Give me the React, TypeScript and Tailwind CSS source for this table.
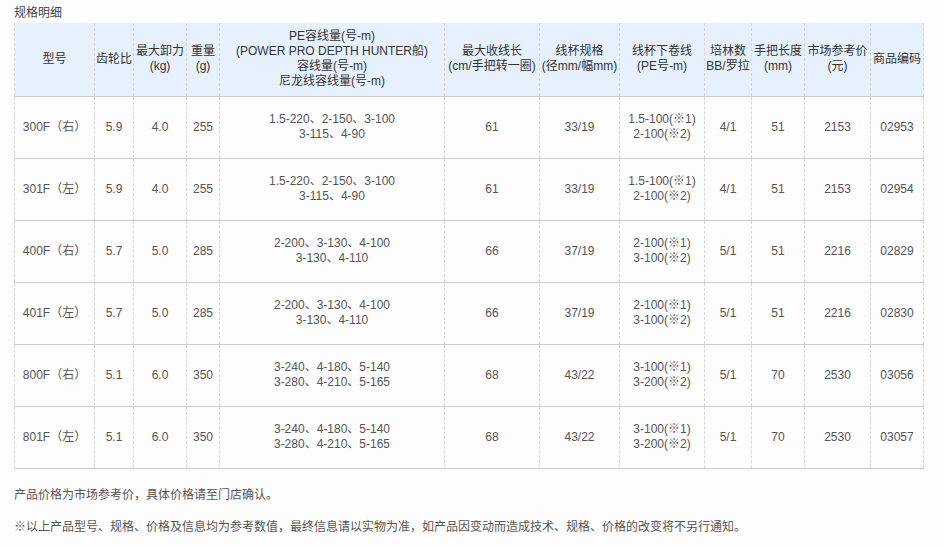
const rows = [
  ["300F（右）", "5.9", "4.0", "255", ["1.5-220、2-150、3-100", "3-115、4-90"], "61", "33/19", ["1.5-100(※1)", "2-100(※2)"], "4/1", "51", "2153", "02953"],
  ["301F（左）", "5.9", "4.0", "255", ["1.5-220、2-150、3-100", "3-115、4-90"], "61", "33/19", ["1.5-100(※1)", "2-100(※2)"], "4/1", "51", "2153", "02954"],
  ["400F（右）", "5.7", "5.0", "285", ["2-200、3-130、4-100", "3-130、4-110"], "66", "37/19", ["2-100(※1)", "3-100(※2)"], "5/1", "51", "2216", "02829"],
  ["401F（左）", "5.7", "5.0", "285", ["2-200、3-130、4-100", "3-130、4-110"], "66", "37/19", ["2-100(※1)", "3-100(※2)"], "5/1", "51", "2216", "02830"],
  ["800F（右）", "5.1", "6.0", "350", ["3-240、4-180、5-140", "3-280、4-210、5-165"], "68", "43/22", ["3-100(※1)", "3-200(※2)"], "5/1", "70", "2530", "03056"],
  ["801F（左）", "5.1", "6.0", "350", ["3-240、4-180、5-140", "3-280、4-210、5-165"], "68", "43/22", ["3-100(※1)", "3-200(※2)"], "5/1", "70", "2530", "03057"],
] as const;

const widths = [80, 39, 53, 33, 225, 95, 80, 85, 47, 53, 66, 53];

const headers: string[][] = [
  ["型号"],
  ["齿轮比"],
  ["最大卸力", "(kg)"],
  ["重量", "(g)"],
  ["PE容线量(号-m)", "(POWER PRO DEPTH HUNTER船)", "容线量(号-m)", "尼龙线容线量(号-m)"],
  ["最大收线长", "(cm/手把转一圈)"],
  ["线杯规格", "(径mm/幅mm)"],
  ["线杯下卷线", "(PE号-m)"],
  ["培林数", "BB/罗拉"],
  ["手把长度", "(mm)"],
  ["市场参考价", "(元)"],
  ["商品编码"],
];

const cell = "border-x border-dashed border-x-[#d6d6d6] text-center align-middle p-0";

export default function App() {
  return (
    <div
      className="min-h-[548px] w-[945px] bg-[#fdfdfd] text-[12px] leading-[15px] text-[#555]"
      style={{ fontFamily: '"Liberation Sans", "Noto Sans CJK SC", sans-serif' }}
    >
      <div className="px-[14px] pt-[6px]">
        <div className="h-[17px] text-[#444]">规格明细</div>
        <table className="table-fixed border-collapse w-[909px]">
          <colgroup>
            {widths.map((w, i) => (
              <col key={i} style={{ width: w }} />
            ))}
          </colgroup>
          <thead>
            <tr className="h-[73px] bg-[#e7f1fd] border-b border-solid border-b-[#cccccc]">
              {headers.map((lines, i) => (
                <th key={i} className={`${cell} font-normal text-[#333] whitespace-nowrap`}>
                  {lines.map((l, j) => (
                    <div key={j}>{l}</div>
                  ))}
                </th>
              ))}
            </tr>
          </thead>
          <tbody>
            {rows.map((r, i) => (
              <tr key={i} className="h-[62px] border-b border-solid border-b-[#cccccc]">
                {r.map((v, j) => (
                  <td key={j} className={`${cell} whitespace-nowrap`}>
                    {Array.isArray(v) ? v.map((l, k) => <div key={k}>{l}</div>) : v}
                  </td>
                ))}
              </tr>
            ))}
          </tbody>
        </table>
        <p className="mt-[19px]">产品价格为市场参考价，具体价格请至门店确认。</p>
        <p className="mt-[17px]">※以上产品型号、规格、价格及信息均为参考数值，最终信息请以实物为准，如产品因变动而造成技术、规格、价格的改变将不另行通知。</p>
      </div>
    </div>
  );
}
